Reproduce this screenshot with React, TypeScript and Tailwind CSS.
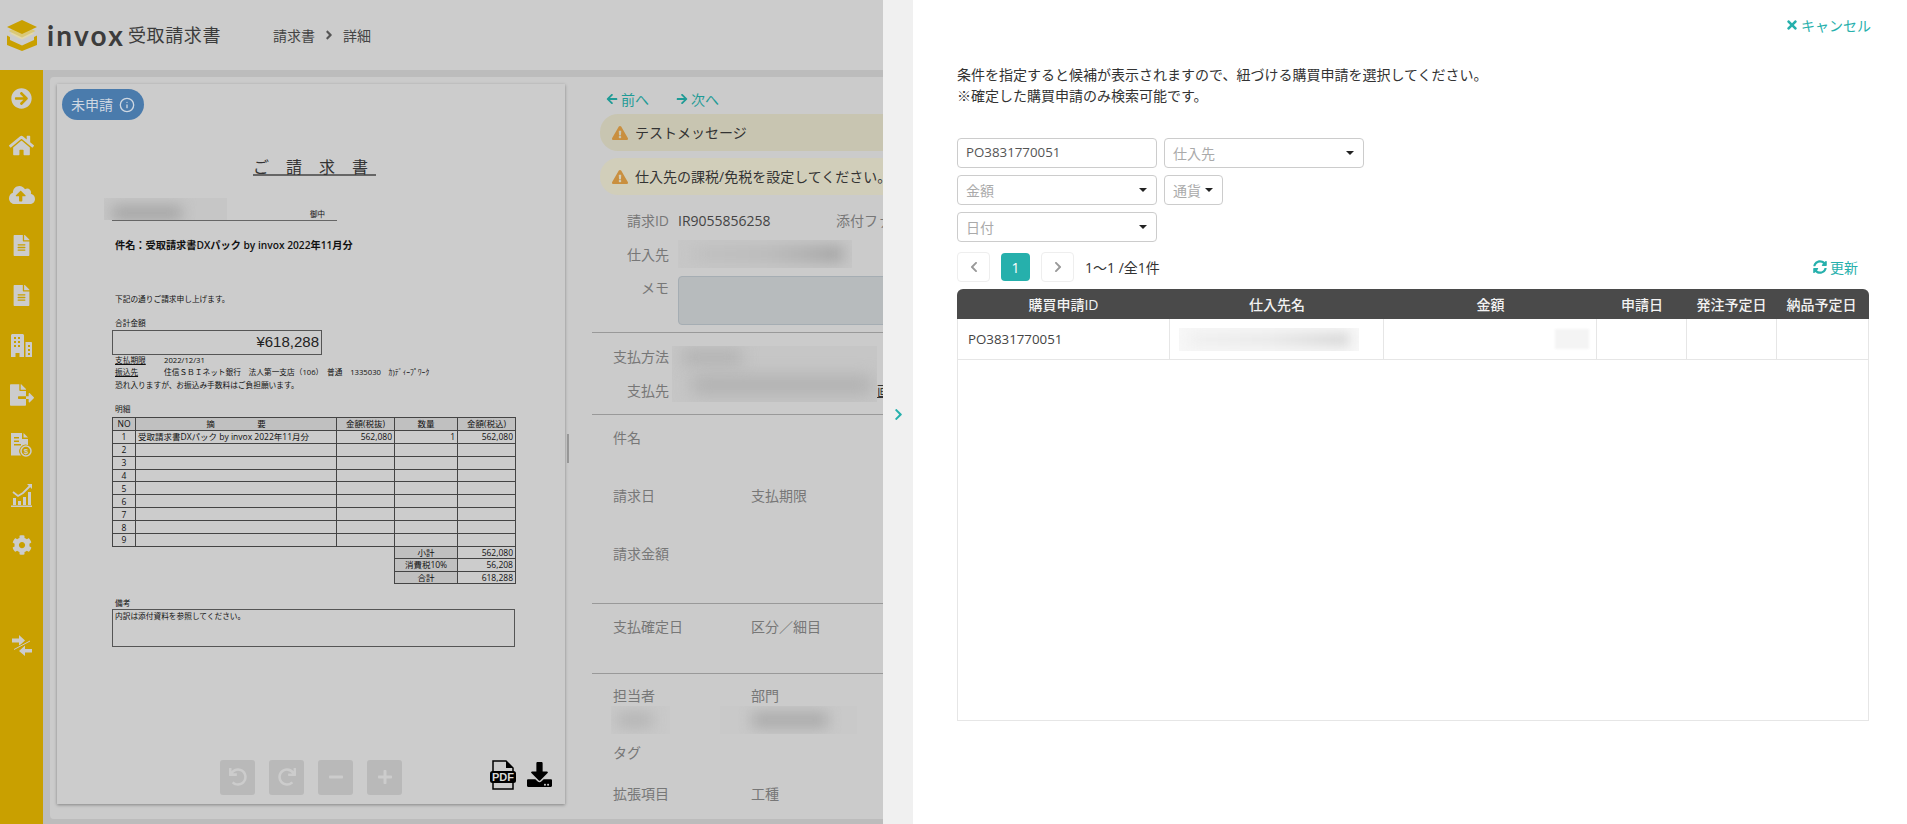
import React from "react";
import {
  FaArrowCircleRight, FaHome, FaCloudUploadAlt, FaFileAlt, FaFileExport, FaCog,
  FaArrowLeft, FaArrowRight, FaExclamationTriangle, FaUndo, FaRedo, FaMinus, FaPlus,
  FaDownload, FaTimes, FaSyncAlt, FaChevronRight, FaChevronLeft, FaAngleRight,
} from "react-icons/fa";
import { FiInfo } from "react-icons/fi";

const Logo = () => (
  <svg width="30" height="31" viewBox="0 0 30 31" className="shrink-0">
    <path d="M0 15.500l3 1.500v3l12 5.500 12-5.500v-3l3-1.500v9.500l-15 6-15-6z" fill="#c9a000" />
    <path d="M3 13.500l12-6 12 6-12 6z" fill="#e2d8ac" />
    <path d="M1.500 11l13.500-6.500 13.500 6.500-13.500 6.500z" fill="#d9c878" />
    <path d="M0 7l15-7 15 7-15 7z" fill="#c9a000" />
  </svg>
);

const BuildingIcon = () => (
  <svg width="21" height="23" viewBox="0 0 21 23">
    <path fillRule="evenodd" fill="#cccccc" d="M0 1.500C0 .7.700 0 1.500 0h10c.8 0 1.500.7 1.500 1.500V23H8.500v-4h-4v4H0zM3 3v2h2V3zm4 0v2h2V3zM3 7v2h2V7zm4 0v2h2V7zM3 11v2h2v-2zm4 0v2h2v-2z" />
    <path fillRule="evenodd" fill="#cccccc" d="M14.500 8H20c.6 0 1 .4 1 1v14h-6.500zM17 11v2h2v-2zm0 4v2h2v-2zm0 4v2h2v-2z" />
  </svg>
);

const InvoiceIcon = () => (
  <svg width="21" height="24" viewBox="0 0 21 24">
    <path fill="#cccccc" fillRule="evenodd" d="M0 0h11v6h6v6a6.500 6.500 0 0 0-7 10.500H0zM3 4v1.500h5V4zm0 3.500V9h5V7.500zm0 3.500v1.500h7V11z" />
    <path fill="#cccccc" d="M12.500 0L17 4.500h-4.500z" />
    <circle cx="15" cy="18" r="5" fill="none" stroke="#cccccc" strokeWidth="1.500" />
    <text x="15" y="21" fontSize="8" fontWeight="700" textAnchor="middle" fill="#cccccc" fontFamily="Liberation Sans">$</text>
  </svg>
);

const ChartIcon = () => (
  <svg width="21" height="23" viewBox="0 0 21 23">
    <path fill="#cccccc" d="M2 14h3v7H2zM7 17h3v4H7zM12 13h3v8h-3zM17 8h3v13h-3zM0 21.500h21V23H0z" />
    <path d="M2 8l5 4 5-3 7-7" fill="none" stroke="#cccccc" strokeWidth="1.800" />
    <path d="M16 0h5v5z" fill="#cccccc" />
  </svg>
);

const ExchangeIcon = () => (
  <svg width="20" height="21" viewBox="0 0 20 21">
    <path fill="#cccccc" d="M0 3.500h7V0l6 5.500-6 5.500V7.500H0z" />
    <path fill="#cccccc" d="M20 14h-7v-3.500l-6 5.500 6 5v-3.500h7z" />
    <path d="M2 14.500L18 6" stroke="#c9a000" strokeWidth="2.400" />
    <path d="M2 14.500L18 6" stroke="#cccccc" strokeWidth="1" />
  </svg>
);

const PdfIcon = () => (
  <svg width="26" height="30" viewBox="0 0 26 30">
    <path d="M3 1h13l7 7v21H3z" fill="#cccccc" stroke="#000" strokeWidth="1.500" />
    <path d="M16 1v7h7z" fill="#000" />
    <rect x="0" y="11" width="26" height="12" rx="2.500" fill="#000" />
    <text x="13" y="21" fontSize="11" fontWeight="700" textAnchor="middle" fill="#d8d8d8" fontFamily="Liberation Sans">PDF</text>
  </svg>
);

const sideIcons: React.ReactNode[] = [
  <FaArrowCircleRight size={21} color="#cccccc" />,
  <FaHome size={25} color="#cccccc" />,
  <FaCloudUploadAlt size={26} color="#cccccc" />,
  <FaFileAlt size={21} color="#cccccc" />,
  <FaFileAlt size={21} color="#cccccc" />,
  <BuildingIcon />,
  <FaFileExport size={24} color="#cccccc" />,
  <InvoiceIcon />,
  <ChartIcon />,
  <FaCog size={20} color="#cccccc" />,
  null,
  <ExchangeIcon />,
];

const Sidebar = () => (
  <div className="w-[43px] shrink-0 bg-[#c9a000] flex flex-col">
    {sideIcons.map((ic, i) => (
      <div key={i} className={"h-[50px] flex items-center justify-center " + (i === 0 ? "pt-[6px]" : "")}>{ic}</div>
    ))}
  </div>
);

const cell = "border border-[#444444] px-[2px] p-0 leading-[11px] overflow-hidden whitespace-nowrap";
const head = cell + " bg-[#c0c0c0] text-center";

const InvoiceTable = () => (
  <table className="table-fixed border-collapse w-[403px] text-[8.500px] text-[#111111]">
    <colgroup>
      <col className="w-[23px]" />
      <col className="w-[201px]" />
      <col className="w-[58px]" />
      <col className="w-[63px]" />
      <col className="w-[58px]" />
    </colgroup>
    <tbody>
      <tr className="h-[12.900px]">
        <td className={head}>NO</td>
        <td className={head}>摘　　　　　要</td>
        <td className={head}>金額(税抜)</td>
        <td className={head}>数量</td>
        <td className={head}>金額(税込)</td>
      </tr>
      <tr className="h-[12.900px]">
        <td className={cell + " text-center"}>1</td>
        <td className={cell}>受取請求書DXパック by invox 2022年11月分</td>
        <td className={cell + " text-right"}>562,080</td>
        <td className={cell + " text-right"}>1</td>
        <td className={cell + " text-right"}>562,080</td>
      </tr>
      {[2, 3, 4, 5, 6, 7, 8, 9].map((n) => (
        <tr key={n} className="h-[12.900px]">
          <td className={cell + " text-center"}>{n}</td>
          <td className={cell}></td>
          <td className={cell}></td>
          <td className={cell}></td>
          <td className={cell}></td>
        </tr>
      ))}
      {[["小計", "562,080"], ["消費税10%", "56,208"], ["合計", "618,288"]].map(([a, b]) => (
        <tr key={a} className="h-[12.300px]">
          <td colSpan={3} className="border-0"></td>
          <td className={head}>{a}</td>
          <td className={cell + " text-right"}>{b}</td>
        </tr>
      ))}
    </tbody>
  </table>
);

const ToolButton = ({ children }: { children: React.ReactNode }) => (
  <div className="w-[35px] h-[35px] rounded-[3px] bg-[#b9b9b9] flex items-center justify-center">{children}</div>
);

const Doc = () => (
  <div className="relative w-[508px] h-[720px] mt-[7px] ml-[7px] shrink-0 bg-[#cccccc] shadow-[0_1px_3px_rgba(0,0,0,0.35)] flex flex-col">
    <div className="mt-[5px] ml-[5px] w-[82px] h-[31px] rounded-full bg-[#4a7bac] text-[#cfd8e2] text-[14px] flex items-center justify-center gap-[6px]">
      未申請 <FiInfo size={16} />
    </div>
    <div className="mt-[40px] ml-[196px] w-[123px] h-[16px] border-b-2 border-[#666666] text-[16px] leading-[14px] text-[#333333] whitespace-nowrap tracking-[0.5px]">
      ご　請　求　書
    </div>
    <div className="relative mt-[22px] ml-[55px] w-[225px] h-[23px] border-b border-[#666666] flex items-end justify-end pr-[12px] text-[7.500px] text-[#111111] leading-[12px]">
      御中
      <div className="absolute left-[-8px] top-0 w-[123px] h-[22px] overflow-hidden bg-[#c6c6c6]">
        <div className="ml-[8px] mt-[8px] w-[70px] h-[14px] bg-[#a4a4a4] blur-[7px]"></div>
      </div>
    </div>
    <div className="mt-[17px] ml-[58px] h-[14px] text-[10.200px] font-semibold leading-[14px] text-[#111111] whitespace-nowrap">
      件名：受取請求書DXパック by invox 2022年11月分
    </div>
    <div className="mt-[42px] ml-[58px] h-[10px] text-[7.700px] leading-[10px] text-[#111111] whitespace-nowrap">下記の通りご請求申し上げます。</div>
    <div className="mt-[14px] ml-[58px] h-[10px] text-[7.700px] leading-[10px] text-[#111111] whitespace-nowrap">合計金額</div>
    <div className="mt-[2px] ml-[55px] w-[210px] h-[25px] border border-[#555555] flex items-center justify-end pr-[2px] text-[15px] text-[#222222] font-['Liberation_Sans']">¥618,288</div>
    <div className="ml-[58px] h-[10px] flex text-[7.700px] leading-[10px] text-[#111111] whitespace-nowrap">
      <span className="w-[49px] shrink-0 underline">支払期限</span><span>2022/12/31</span>
    </div>
    <div className="mt-[2px] ml-[58px] h-[10px] flex text-[7.700px] leading-[10px] text-[#111111] whitespace-nowrap">
      <span className="w-[49px] shrink-0 underline">振込先</span><span>住信ＳＢＩネット銀行　法人第一支店（106）　普通　1335030　ｶ)ﾃﾞｨｰﾌﾟﾜｰｸ</span>
    </div>
    <div className="mt-[3px] ml-[58px] h-[10px] text-[7.700px] leading-[10px] text-[#111111] whitespace-nowrap">恐れ入りますが、お振込み手数料はご負担願います。</div>
    <div className="mt-[14px] ml-[58px] h-[10px] text-[7.700px] leading-[10px] text-[#111111]">明細</div>
    <div className="mt-[3px] ml-[55px]"><InvoiceTable /></div>
    <div className="mt-[14px] ml-[58px] h-[10px] text-[7.700px] leading-[10px] text-[#111111]">備考</div>
    <div className="mt-[1px] ml-[55px] w-[403px] h-[38px] border border-[#555555] px-[2px] text-[7.700px] leading-[12px] text-[#111111]">内訳は添付資料を参照してください。</div>
    <div className="mt-[113px] flex items-start h-[35px] ml-[163px]">
      <div className="flex gap-[14px]">
        <ToolButton><FaUndo size={18} color="#cccccc" /></ToolButton>
        <ToolButton><FaRedo size={18} color="#cccccc" /></ToolButton>
        <ToolButton><FaMinus size={16} color="#cccccc" /></ToolButton>
        <ToolButton><FaPlus size={16} color="#cccccc" /></ToolButton>
      </div>
      <div className="ml-[88px]"><PdfIcon /></div>
      <div className="ml-[11px] mt-[2px]"><FaDownload size={25} color="#000000" /></div>
    </div>
  </div>
);

const Alert = ({ text, bg }: { text: string; bg: string }) => (
  <div className={"mt-[7px] ml-[8px] w-[320px] h-[37px] shrink-0 rounded-l-[18px] flex items-center pl-[12px] gap-[7px] text-[14px] text-[#333333] whitespace-nowrap " + bg}>
    <FaExclamationTriangle size={16} color="#c98f3f" />
    {text}
  </div>
);

const Blur = ({ w, h, bg, blob }: { w: string; h: string; bg: string; blob: string }) => (
  <div className={"overflow-hidden " + bg + " " + w + " " + h}>
    <div className={"mt-[6px] h-[16px] blur-[7px] " + blob}></div>
  </div>
);

const Label2 = ({ a, b, mt }: { a: string; b?: string; mt: string }) => (
  <div className={"ml-[21px] h-[20px] flex items-center text-[14px] text-[#777777] " + mt}>
    <span className="w-[138px] shrink-0">{a}</span>
    {b && <span>{b}</span>}
  </div>
);

const Divider = ({ mt }: { mt: string }) => <div className={"h-px w-[300px] shrink-0 bg-[#999999] " + mt}></div>;

const Details = () => (
  <div className="ml-[27px] w-[291px] overflow-hidden flex flex-col">
    <div className="mt-[14px] h-[16px] pl-[14px] flex items-center text-[14px] text-[#1f9b96] font-normal">
      <span className="w-[70px] shrink-0 flex items-center gap-[3px]"><FaArrowLeft size={12} />前へ</span>
      <span className="flex items-center gap-[3px]"><FaArrowRight size={12} />次へ</span>
    </div>
    <Alert text="テストメッセージ" bg="bg-[#c8c5b1]" />
    <Alert text="仕入先の課税/免税を設定してください。" bg="bg-[#d1ceba]" />
    <div className="mt-[15px] h-[20px] flex items-center text-[14px] whitespace-nowrap">
      <span className="w-[77px] shrink-0 text-right text-[#777777]">請求ID</span>
      <span className="ml-[9px] w-[158px] shrink-0 text-[#444444]">IR9055856258</span>
      <span className="text-[#777777]">添付ファイル</span>
    </div>
    <div className="mt-[10px] h-[28px] flex items-center text-[14px]">
      <span className="w-[77px] shrink-0 text-right text-[#777777]">仕入先</span>
      <div className="ml-[9px]">
        <Blur w="w-[174px]" h="h-[28px]" bg="bg-[#c7c7c7]" blob="ml-[15px] w-[150px] bg-linear-to-r from-[#c0c0c0] via-[#bababa] to-[#a2a2a2]" />
      </div>
    </div>
    <div className="mt-[8px] h-[49px] flex text-[14px]">
      <span className="w-[77px] shrink-0 text-right text-[#777777] pt-[1px]">メモ</span>
      <div className="ml-[9px] w-[220px] h-[49px] shrink-0 bg-[#b7bbbd] border border-[#a5adb3] rounded-[4px]"></div>
    </div>
    <Divider mt="mt-[7px]" />
    <div className="relative mt-[14px] h-[54px] flex flex-col justify-between text-[14px] text-[#777777]">
      <span className="w-[77px] text-right h-[20px] leading-[20px]">支払方法</span>
      <span className="w-[77px] text-right h-[20px] leading-[20px]">支払先</span>
      <span className="absolute left-[285px] bottom-0 h-[20px] leading-[20px] text-[#333333] underline">画</span>
      <div className="absolute left-[80px] top-[-1px] w-[205px] h-[56px] overflow-hidden bg-[#c6c6c6]">
        <div className="ml-[10px] mt-[4px] w-[60px] h-[14px] bg-[#b0b0b0] blur-[8px]"></div>
        <div className="ml-[20px] mt-[14px] w-[180px] h-[14px] bg-[#aaaaaa] blur-[9px]"></div>
      </div>
    </div>
    <Divider mt="mt-[13px]" />
    <Label2 a="件名" mt="mt-[12px]" />
    <Label2 a="請求日" b="支払期限" mt="mt-[38px]" />
    <Label2 a="請求金額" mt="mt-[38px]" />
    <Divider mt="mt-[40px]" />
    <Label2 a="支払確定日" b="区分／細目" mt="mt-[12px]" />
    <Divider mt="mt-[37px]" />
    <Label2 a="担当者" b="部門" mt="mt-[11px]" />
    <div className="mt-[1px] ml-[19px] h-[28px] flex gap-[50px]">
      <Blur w="w-[59px]" h="h-[28px]" bg="bg-[#c9c9c9]" blob="ml-[6px] w-[36px] bg-[#b6b6b6]" />
      <Blur w="w-[137px]" h="h-[28px]" bg="bg-[#c9c9c9]" blob="ml-[32px] w-[76px] bg-[#ababab]" />
    </div>
    <Label2 a="タグ" mt="mt-[8px]" />
    <Label2 a="拡張項目" b="工種" mt="mt-[21px]" />
  </div>
);

const LeftPane = () => (
  <div className="w-[883px] h-[824px] shrink-0 overflow-hidden bg-[#bcbcbc] flex flex-col">
    <header className="h-[70px] shrink-0 bg-[#cccccc] flex items-center pl-[7px]">
      <Logo />
      <span className="ml-[10px] w-[81px] font-['Lato'] font-bold text-[28px] tracking-[2.200px] text-[#3c3c3c] leading-none">invox</span>
      <span className="text-[18px] tracking-[0.6px] text-[#3c3c3c] whitespace-nowrap">受取請求書</span>
      <span className="ml-[52px] text-[14px] text-[#444444]">請求書</span>
      <FaAngleRight size={14} color="#555555" className="ml-[7px]" />
      <span className="ml-[7px] text-[14px] text-[#444444]">詳細</span>
    </header>
    <div className="flex flex-1 min-h-0">
      <Sidebar />
      <div className="flex-1 pt-[7px] pl-[7px]">
        <div className="h-[742px] bg-[#cbcbcb] rounded-l-[4px] flex">
          <Doc />
          <div className="w-[2px] h-[29px] mt-[357px] ml-[2px] bg-[#999999] shrink-0"></div>
          <div className="-ml-[4px] flex"><Details /></div>
        </div>
      </div>
    </div>
  </div>
);

const field = "h-[30px] border border-[#cccccc] rounded-[4px] px-[8px] flex items-center whitespace-nowrap";

const SelectBox = ({ label, w }: { label: string; w: string }) => (
  <div className={field + " justify-between text-[14px] text-[#aaaaaa] " + w}>
    <span>{label}</span>
    <span className="w-0 h-0 mr-[1px] border-l-[4px] border-r-[4px] border-t-[4px] border-l-transparent border-r-transparent border-t-[#222222]"></span>
  </div>
);

const PageBtn = ({ children }: { children: React.ReactNode }) => (
  <div className="w-[33px] h-[30px] border border-[#eeeeee] rounded-[4px] flex items-center justify-center">{children}</div>
);

const RightPane = () => (
  <div className="flex-1 h-[824px] bg-white pl-[44px] pr-[38px] pt-[15px] text-[14px] text-[#333333] overflow-hidden">
    <div className="h-[20px] flex justify-end items-center gap-[2px] text-[#26b0ac] -mr-[2px]">
      <FaTimes size={14} /><span>キャンセル</span>
    </div>
    <p className="mt-[29px] leading-[21px] h-[42px]">
      条件を指定すると候補が表示されますので、紐づける購買申請を選択してください。<br />
      ※確定した購買申請のみ検索可能です。
    </p>
    <div className="mt-[32px] flex flex-col gap-[7px]">
      <div className="flex gap-[7px]">
        <div className={field + " w-[200px] text-[13.300px] text-[#555555]"}>PO3831770051</div>
        <SelectBox label="仕入先" w="w-[200px]" />
      </div>
      <div className="flex gap-[7px]">
        <SelectBox label="金額" w="w-[200px]" />
        <SelectBox label="通貨" w="w-[59px]" />
      </div>
      <SelectBox label="日付" w="w-[200px]" />
    </div>
    <div className="mt-[10px] h-[30px] flex items-center">
      <PageBtn><FaChevronLeft size={12} color="#999999" /></PageBtn>
      <div className="ml-[11px] w-[29px] h-[28px] rounded-[4px] bg-[#26b0ac] text-white flex items-center justify-center">1</div>
      <div className="ml-[11px]"><PageBtn><FaChevronRight size={12} color="#999999" /></PageBtn></div>
      <span className="ml-[11px]">1〜1 /全1件</span>
      <div className="ml-auto mr-[11px] flex items-center gap-[3px] text-[#26b0ac]">
        <FaSyncAlt size={14} /><span>更新</span>
      </div>
    </div>
    <div className="mt-[7px] h-[432px] border border-t-0 border-[#e6e6e6] rounded-t-[6px]">
      <div className="-mx-px h-[30px] bg-[#4a4a4a] rounded-t-[6px] grid grid-cols-[213px_214px_213px_90px_90px_92px] text-white font-medium">
        {["購買申請ID", "仕入先名", "金額", "申請日", "発注予定日", "納品予定日"].map((t, i) => (
          <div key={t} className={"flex items-center justify-center whitespace-nowrap text-[#f2f2f2] " + (i === 5 ? "pr-[3px]" : i === 4 ? "pr-[1px]" : "")}>{t}</div>
        ))}
      </div>
      <div className="-ml-px h-[41px] border-b border-[#e6e6e6] grid grid-cols-[213px_214px_213px_90px_90px_91px]">
        <div className="border-r border-[#e6e6e6] pl-[11px] pt-[1px] flex items-center text-[13.300px] text-[#444444]">PO3831770051</div>
        <div className="border-r border-[#e6e6e6] pl-[9px] flex items-center">
          <div className="w-[180px] h-[23px] bg-[#f7f7f7] overflow-hidden">
            <div className="ml-[10px] mt-[5px] w-[160px] h-[13px] bg-linear-to-r from-[#efefef] via-[#e8e8e8] to-[#d4d4d4] blur-[6px]"></div>
          </div>
        </div>
        <div className="border-r border-[#e6e6e6] flex items-center justify-end pr-[7px]">
          <div className="w-[34px] h-[20px] bg-[#f4f4f4] blur-[1px]"></div>
        </div>
        <div className="border-r border-[#e6e6e6]"></div>
        <div className="border-r border-[#e6e6e6]"></div>
        <div></div>
      </div>
    </div>
  </div>
);

export default function App() {
  return (
    <div className="w-[1907px] h-[824px] flex overflow-hidden font-['Open_Sans','Noto_Sans_CJK_JP',sans-serif]">
      <LeftPane />
      <div className="w-[30px] h-[824px] shrink-0 bg-[#f0f0f0] flex items-center justify-center pt-[4px]">
        <FaChevronRight size={13} color="#26b0ac" />
      </div>
      <RightPane />
    </div>
  );
}
